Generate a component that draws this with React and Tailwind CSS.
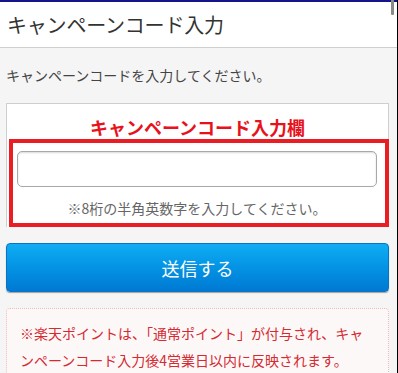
import React from 'react';

const jp = { fontFamily: '"Noto Sans CJK JP", "Noto Sans", sans-serif' };

const CampaignCodePage = () => {
    return (
        <div className="relative flex w-[398px] h-[373px] overflow-hidden bg-black" style={jp}>
            <div className="flex flex-col w-[397px] h-full bg-[#f5f5f5]">
                {/* top bar */}
                <div className="shrink-0 h-[2px] bg-[#15158a]" />
                <header className="shrink-0 h-[46px] flex items-center px-[7px] bg-white border-b border-[#cfcfcf]">
                    <h1 className="text-[20px] leading-[24px] text-[#333] tracking-[-0.2px]">キャンペーンコード入力</h1>
                </header>

                <div className="shrink-0 flex flex-col px-[6px] pr-[8px]">
                    <p className="pt-[17px] pb-[18px] text-[14px] leading-[20px] text-[#444]">
                        キャンペーンコードを入力してください。
                    </p>

                    {/* form panel */}
                    <div className="bg-white border-l border-t border-r border-[#cfcfcf]">
                        <div className="pt-[11px] text-center text-[18px] leading-[24px] font-bold text-[#e8121c]">
                            キャンペーンコード入力欄
                        </div>
                        <div className="ml-[2px] mr-[-1px] border-4 border-[#ea1c24] pt-[8px] pb-[5px] pl-[4px] pr-[8px]">
                            <input
                                type="text"
                                className="block w-[360px] h-[36px] rounded-[5px] border border-[#a8a8a8] bg-white shadow-[inset_0_1px_2px_rgba(0,0,0,0.15)] outline-none"
                            />
                            <p className="mt-[11px] text-center text-[14px] leading-[20px] text-[#666]">
                                ※8桁の半角英数字を入力してください。
                            </p>
                        </div>
                    </div>

                    {/* submit */}
                    <button className="mt-[16px] h-[49px] w-full rounded-[4px] border border-[#0a74c4] bg-gradient-to-b from-[#10adf4] to-[#0079d3] shadow-[0_1px_1px_rgba(0,0,0,0.35)] text-white text-[18px] leading-[24px]">
                        送信する
                    </button>

                    {/* notice */}
                    <div className="mt-[16px] rounded-[4px] border border-dotted border-[#f2b9bb] bg-[#fdf8f8] px-[13px] pt-[11px] pb-[10px]">
                        <p className="text-[14px] leading-[27px] text-[#d42a31]">
                            ※楽天ポイントは、「通常ポイント」が付与され、キャンペーンコード入力後4営業日以内に反映されます。
                        </p>
                    </div>
                </div>
            </div>

            {/* scrollbar thumb */}
            <div className="absolute top-0 right-[4px] w-[3px] h-[15px] rounded-b-[1px] bg-[#8a8a8a]" />
        </div>
    );
};

export default function App() {
    return <CampaignCodePage />;
}
